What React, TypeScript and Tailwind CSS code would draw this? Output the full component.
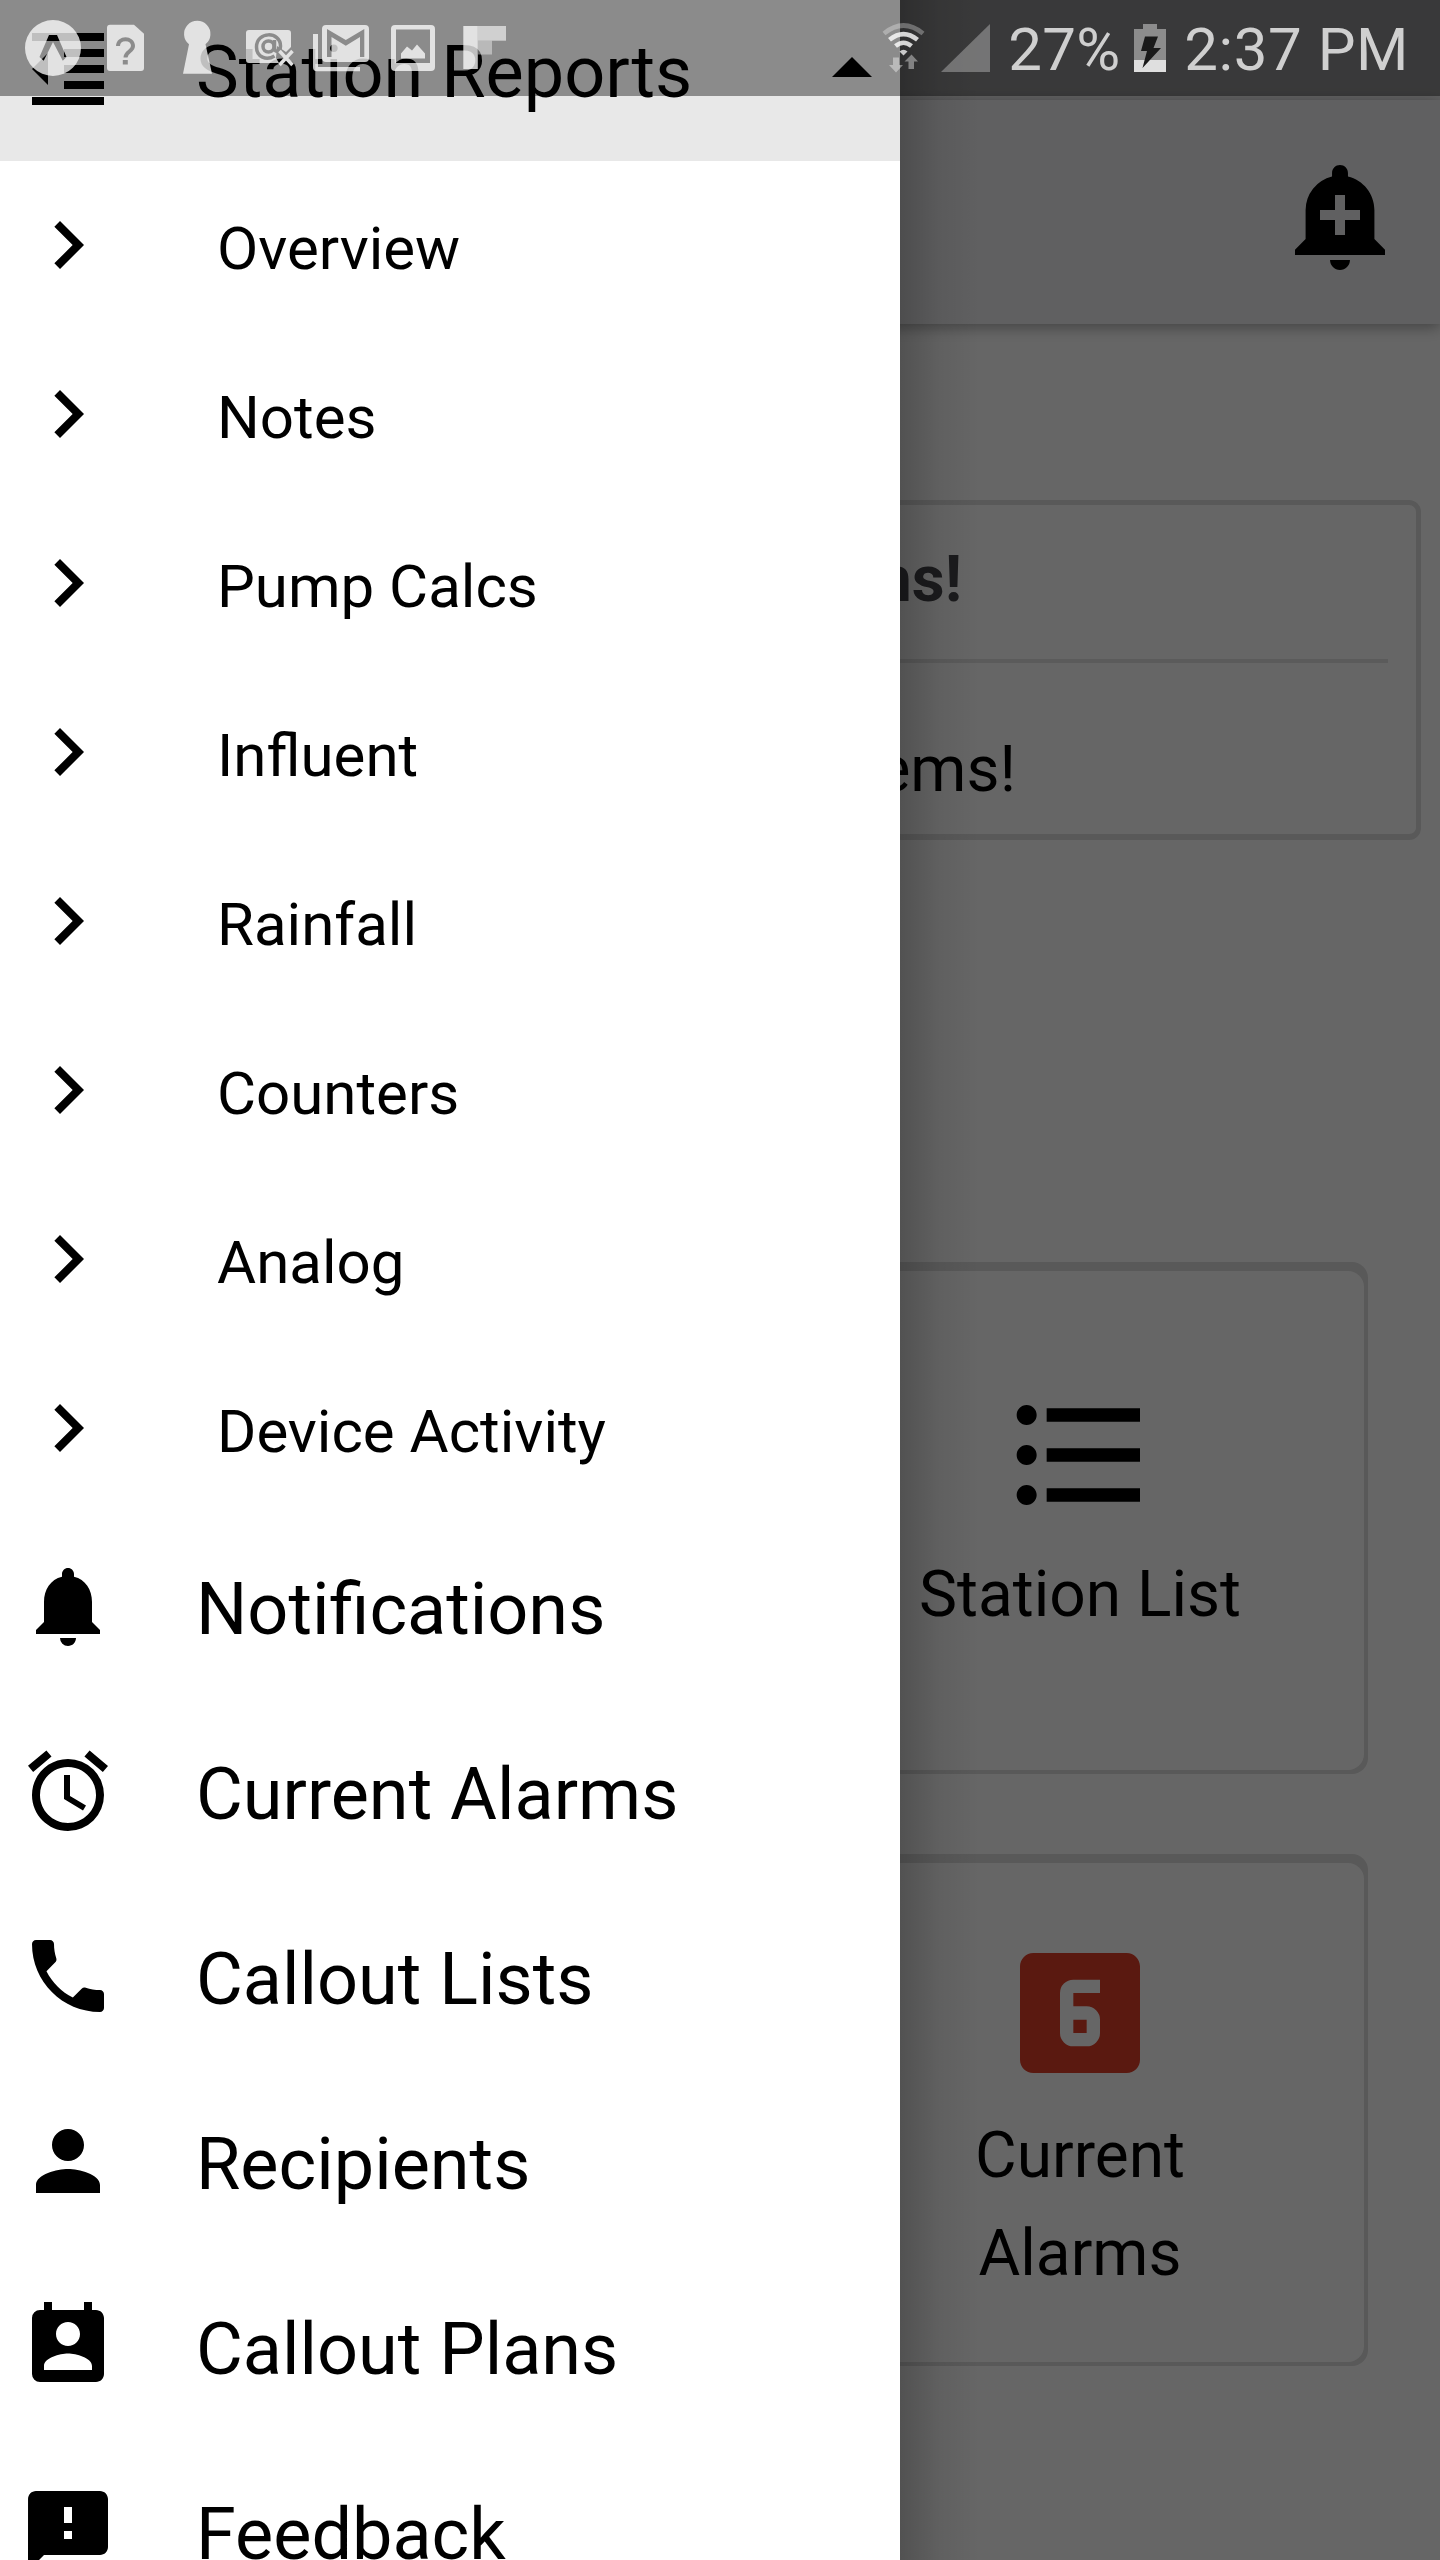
import type { ReactNode } from 'react';
import type { IconType } from 'react-icons';
import {
  MdAccessAlarm,
  MdAddAlert,
  MdArrowDropUp,
  MdChevronRight,
  MdFeedback,
  MdFormatIndentDecrease,
  MdFormatListBulleted,
  MdLooks6,
  MdNotifications,
  MdPermContactCalendar,
  MdPerson,
  MdPhone,
} from 'react-icons/md';

const reports = [
  'Overview',
  'Notes',
  'Pump Calcs',
  'Influent',
  'Rainfall',
  'Counters',
  'Analog',
  'Device Activity',
];

const menuItems: { icon: IconType; label: string }[] = [
  { icon: MdNotifications, label: 'Notifications' },
  { icon: MdAccessAlarm, label: 'Current Alarms' },
  { icon: MdPhone, label: 'Callout Lists' },
  { icon: MdPerson, label: 'Recipients' },
  { icon: MdPermContactCalendar, label: 'Callout Plans' },
  { icon: MdFeedback, label: 'Feedback' },
];

function StatusIcon({ viewBox, className, children }: { viewBox: string; className: string; children: ReactNode }) {
  return (
    <svg viewBox={viewBox} className={`h-24 shrink-0 ${className}`} fill="#fff" fillOpacity={0.75} aria-hidden="true">
      {children}
    </svg>
  );
}

function StatusBar() {
  return (
    <div className="absolute inset-x-0 top-0 z-30 flex h-24 items-center overflow-hidden bg-black/40 text-[#cfcfcf]">
      <StatusIcon viewBox="0 0 94 96" className="w-[94px]">
        <path
          fillRule="evenodd"
          d="M53 20a28 28 0 1 1 0 56a28 28 0 0 1 0-56zM49 35L39.5 57l4.2 3.8L53 42l9.8 18.8L66.500 57L57 35z"
        />
      </StatusIcon>
      <StatusIcon viewBox="94 0 70 96" className="w-[70px]">
        <path d="M110 24.700h24l10 9V68a3 3 0 0 1-3 3h-31a3 3 0 0 1-3-3V27.700a3 3 0 0 1 3-3z" />
        <path d="M118 46c0-9 15-9 15 0c0 5.500-7.500 5.500-7.500 11.500" fill="none" stroke="#8c8c8c" strokeWidth="4" />
        <rect x="122.800" y="60" width="5" height="4.500" fill="#8c8c8c" fillOpacity={1} />
      </StatusIcon>
      <StatusIcon viewBox="164 0 65 96" className="w-[65px]">
        <path d="M189 44.300a13.200 13.200 0 1 1 16.500 0l6.500 29.400h-29z" />
      </StatusIcon>
      <StatusIcon viewBox="229 0 74 96" className="w-[74px]">
        <path d="M249 30h39a3 3 0 0 1 3 3v14l-5 5-9-6-1 12 3 5h-30a3 3 0 0 1-3-3V33a3 3 0 0 1 3-3z" />
        <g fill="none" stroke="#8c8c8c" strokeWidth="3.500">
          <circle cx="268.500" cy="46.500" r="5.500" />
          <path d="M274.500 40v8c0 5 6 4 6-2c0-15-24-15-24 1c0 10 10 14 18 9" />
        </g>
        <path d="M279.500 51l13 14M292.500 51l-13 14" fill="none" stroke="#e2e2e2" strokeWidth="3.500" />
      </StatusIcon>
      <StatusIcon viewBox="303 0 77 96" className="w-[77px]">
        <path d="M313 34h5v33h42v4.300h-43a4 4 0 0 1-4-4z" />
        <path
          fillRule="evenodd"
          d="M326 25h39a4 4 0 0 1 4 4v29a4 4 0 0 1-4 4h-39a4 4 0 0 1-4-4V29a4 4 0 0 1 4-4zM327 29v28h4.500V37l14.300 8.700L360 37v20h4.300V29L345.800 40z"
        />
      </StatusIcon>
      <StatusIcon viewBox="380 0 69 96" className="w-[69px]">
        <path
          fillRule="evenodd"
          d="M395 25h36a4 4 0 0 1 4 4v38a4 4 0 0 1-4 4h-36a4 4 0 0 1-4-4V29a4 4 0 0 1 4-4zM396 29.500V63h34V29.500z"
        />
        <path d="M401 58.500v-5l6-7 5 4 5-6 8 9v5z" />
      </StatusIcon>
      <StatusIcon viewBox="449 0 60 96" className="w-[60px]">
        <path d="M463.300 26h14.500v43h-14.500z" />
        <path d="M477.800 26H506v14.700h-28.200z" fillOpacity={0.6} />
        <path d="M477.800 40.700H492v13.800h-14.200z" fillOpacity={0.4} />
      </StatusIcon>

      <div className="ml-auto flex items-center pr-[31px]">
        <StatusIcon viewBox="878 0 54 96" className="w-[54px]">
          <g fill="none" stroke="#fff" strokeWidth="4.600" strokeOpacity={0.8}>
            <path d="M883 33.500q19.500-16 39 0" strokeOpacity={0.3} />
            <path d="M888.500 39.800q14-11.500 28 0" />
            <path d="M894.500 46q8-6.500 16 0" />
          </g>
          <path d="M898.500 51.500q4-3.500 8 0l-4 4z" />
          <path d="M892 57.500h6V65h4l-7 7.500-7-7.500h4z" fillOpacity={0.4} />
          <path d="M907.500 69h5.500v-7.500h4l-6.500-7-7 7h4z" fillOpacity={0.4} />
        </StatusIcon>
        <StatusIcon viewBox="932 0 75 96" className="w-[75px]">
          <path d="M989 24v48h-49z" fillOpacity={0.3} />
        </StatusIcon>
        <span className="w-[122px] pt-1 text-[60px] leading-none tracking-[0.3px]">27%</span>
        <StatusIcon viewBox="1129 0 54 96" className="w-[54px]">
          <path d="M1142 24h14v5h9v31h-32V29h9z" fillOpacity={0.42} />
          <path d="M1133 60h32v12h-32z" fillOpacity={0.84} />
          <path d="M1144 36.500h13l-4.500 11.500h7.500l-18.500 20 4.500-17h-6z" fill="#1a1a1a" fillOpacity={1} />
        </StatusIcon>
        <span className="pt-1 text-[60px] leading-none tracking-[0.55px] whitespace-nowrap">2:37 PM</span>
      </div>
    </div>
  );
}

function Tile({ className, children }: { className: string; children: ReactNode }) {
  return (
    <div className="col-start-2 mx-[72px] h-[512px] rounded-2xl bg-[#dedede] px-1 pt-[9px] pb-1">
      <div
        className={`flex h-full flex-col items-center rounded-2xl bg-white text-center text-[64px] leading-[98px] ${className}`}
      >
        {children}
      </div>
    </div>
  );
}

function Home() {
  return (
    <main className="flex h-full flex-col bg-white">
      <div className="h-[100px] bg-[#f1f1f3]" />
      <header className="z-10 flex h-56 shrink-0 items-center justify-end bg-[#f1f1f3] pt-1.5 pr-10 shadow-[0_3px_14px_rgba(0,0,0,0.36)]">
        <MdAddAlert size={120} />
      </header>

      <section className="mr-[19px] ml-5 mt-44 h-[340px] shrink-0 rounded-xl border-[5px] border-b-[6px] border-[#dedede] px-7 text-right">
        <h2 className="h-[158px] border-b-4 border-[#e4e4e4] pt-[27px] pr-[426px] text-[64px] leading-[96px] font-bold text-[#454549]">
          Alarms!
        </h2>
        <p className="pt-[59px] pr-[372px] text-[64px] leading-[96px]">No problems!</p>
      </section>

      <div className="mt-[422px] grid grid-cols-2 gap-y-20">
        <Tile className="pt-[104px]">
          <MdFormatListBulleted size={160} />
          <span className="pt-[11px] whitespace-nowrap">Station List</span>
        </Tile>
        <Tile className="pt-[70px]">
          <MdLooks6 size={160} className="text-[#e13f28]" />
          <span className="w-64 pt-3.5">Current Alarms</span>
        </Tile>
      </div>
    </main>
  );
}

function Drawer() {
  return (
    <nav className="absolute inset-y-0 left-0 z-20 w-[900px] bg-white">
      <div className="flex h-full flex-col overflow-hidden text-[72px] leading-none">
        <div className="-mt-6 flex h-[185px] shrink-0 items-center bg-[#e8e8e8] pl-5">
          <MdFormatIndentDecrease size={96} />
          <span className="grow pt-2 pl-20">Station Reports</span>
          <MdArrowDropUp size={96} />
        </div>
        {reports.map((label) => (
          <div key={label} className="flex h-[169px] shrink-0 items-center pb-px pl-5 text-[60px]">
            <MdChevronRight size={96} />
            <span className="pt-2 pl-[101px]">{label}</span>
          </div>
        ))}
        {menuItems.map((item) => (
          <div key={item.label} className="flex h-[185px] shrink-0 items-center pl-5">
            <item.icon size={96} />
            <span className="pt-2 pl-20">{item.label}</span>
          </div>
        ))}
      </div>
      {/* soft edge cast on the dimmed page */}
      <div className="absolute inset-y-0 left-full w-20 bg-linear-to-r from-black/20 via-black/6 to-transparent" />
    </nav>
  );
}

export default function App() {
  return (
    <div className="relative h-[2560px] w-[1440px] overflow-hidden font-['Roboto',sans-serif] text-black">
      <Home />
      <div className="absolute inset-0 z-10 bg-black/60" />
      <Drawer />
      <StatusBar />
    </div>
  );
}
